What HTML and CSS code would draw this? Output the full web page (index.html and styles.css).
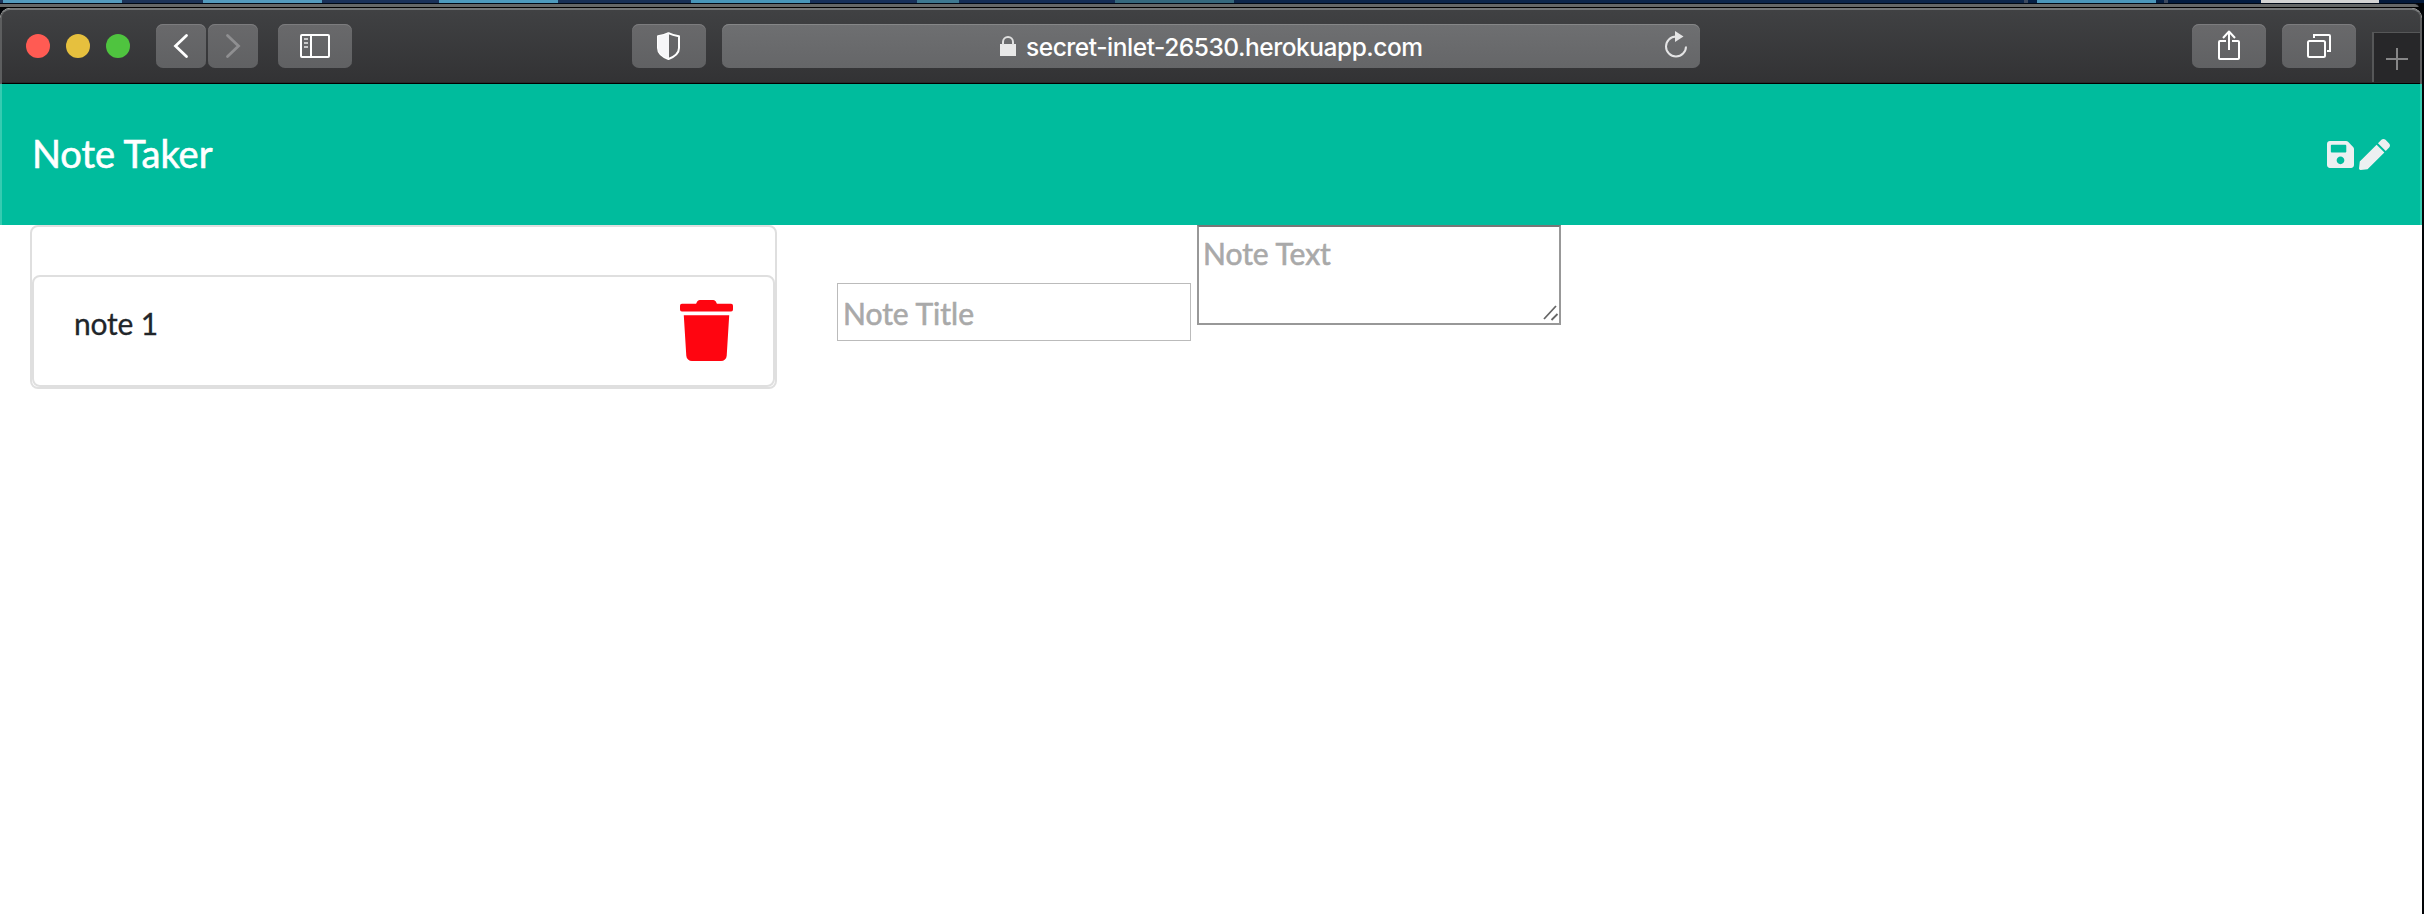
FILE: index.html
```html
<!DOCTYPE html>
<html lang="en">
<head>
<meta charset="utf-8">
<title>Note Taker</title>
<link rel="stylesheet" href="styles.css">
</head>
<body>
<div class="desktop"></div>
<div class="rim"></div>
<div class="window">
  <div class="toolbar">
    <div class="lights"><i class="light red"></i><i class="light yellow"></i><i class="light green"></i></div>
    <div class="nav">
      <button class="btn narrow"><svg width="50" height="44" fill="none" stroke="#fff" stroke-width="2.8" stroke-linecap="round"><path d="M30.5 11.5L19.5 22l11 10.500"/></svg></button>
      <button class="btn narrow"><svg width="50" height="44" fill="none" stroke="#8f8f91" stroke-width="2.8" stroke-linecap="round"><path d="M19.500 11.500L30.500 22l-11 10.500"/></svg></button>
    </div>
    <button class="btn sidebar"><svg width="74" height="44" fill="none" stroke="#fff" stroke-width="2"><rect x="23" y="11" width="28" height="22" rx="1"/><path d="M33 11v22"/><path stroke="#c8c8c9" d="M26 15h4M26 19h4M26 23h4"/></svg></button>
    <button class="btn shield"><svg width="74" height="44"><path fill="none" stroke="#fff" stroke-width="2" stroke-linejoin="round" d="M36.500 9.200C40 11 43.500 11.700 47 12.300V24c0 5.500-4.500 8.700-10.500 11C30.500 32.700 26 29.500 26 24V12.300C29.500 11.700 33 11 36.500 9.200z"/><path fill="#f6f6f8" d="M37 9C33 11 29.500 11.700 26 12.300V24c0 5.500 5 8.700 11 11z"/></svg></button>
    <div class="address">
      <svg class="lock" width="16" height="20"><path fill="#e8e8e8" d="M0 8h16v12H0z"/><path fill="none" stroke="#e0e0e0" stroke-width="2" d="M3 9V6a5 5 0 0 1 10 0v3"/></svg>
      <span class="url">secret-inlet-26530.herokuapp.com</span>
      <svg class="reload" width="24" height="28"><path fill="none" stroke="#e4e4e5" stroke-width="2" d="M12 5.500A10 10 0 1 0 22 15.500"/><path fill="#e4e4e5" d="M11 0l8.500 5.500L11 11z"/></svg>
    </div>
    <button class="btn share"><svg width="74" height="44" fill="none" stroke="#fff" stroke-width="2" stroke-linejoin="round"><path d="M34 17h-6q-1 0-1 1v16q0 1 1 1h18q1 0 1-1V18q0-1-1-1h-6M37 26V8M31 14l6-6.500 6 6.500"/></svg></button>
    <button class="btn"><svg width="74" height="44" fill="none" stroke="#fff" stroke-width="2"><rect x="26" y="17" width="17" height="16" rx="1.500"/><path d="M32 14v-3h15q1 0 1 1v15h-3"/></svg></button>
    <div class="newtab"><svg width="46" height="49" stroke="#868687" stroke-width="2"><path d="M12 26h22M23 15v22"/></svg></div>
  </div>
  <header class="header">
    <h1 class="brand">Note Taker</h1>
    <div class="actions">
      <svg width="27" height="31" viewBox="0 0 448 512" fill="#ecf0f1"><path d="M433.941 129.941l-83.882-83.882A48 48 0 0 0 316.118 32H48C21.490 32 0 53.490 0 80v352c0 26.510 21.490 48 48 48h352c26.510 0 48-21.490 48-48V163.882a48 48 0 0 0-14.059-33.941zM224 416c-35.346 0-64-28.654-64-64s28.654-64 64-64 64 28.654 64 64-28.654 64-64 64zm96-304.520V212c0 6.627-5.373 12-12 12H76c-6.627 0-12-5.373-12-12V108c0-6.627 5.373-12 12-12h228.520c3.183 0 6.235 1.264 8.485 3.515l3.480 3.480A11.996 11.996 0 0 1 320 111.480z"/></svg>
      <svg width="31" height="31" viewBox="0 0 512 512" fill="#ecf0f1"><path d="M290.740 93.240l128.020 128.020-277.990 277.990-114.140 12.600C11.350 513.540-1.560 500.620.140 485.340l12.700-114.220 277.900-277.880zm207.200-19.060l-60.110-60.110c-18.750-18.750-49.160-18.750-67.910 0l-56.550 56.550 128.020 128.020 56.550-56.550c18.750-18.760 18.750-49.160 0-67.910z"/></svg>
    </div>
  </header>
  <main class="content">
    <section class="list">
      <article class="note">
        <span class="note-title">note 1</span>
        <svg width="53" height="61" viewBox="0 0 448 512" preserveAspectRatio="none" fill="#ff0510"><path d="M432 32H312l-9.400-18.700A24 24 0 0 0 281.100 0H166.800a23.720 23.720 0 0 0-21.400 13.300L136 32H16A16 16 0 0 0 0 48v32a16 16 0 0 0 16 16h416a16 16 0 0 0 16-16V48a16 16 0 0 0-16-16zM53.200 467a48 48 0 0 0 47.900 45h245.800a48 48 0 0 0 47.900-45L416 128H32z"/></svg>
      </article>
    </section>
    <form class="editor">
      <input class="title-input" placeholder="Note Title">
      <div class="text-wrap">
        <textarea class="text-input" placeholder="Note Text"></textarea>
        <svg class="grip" width="16" height="16" stroke="#666" stroke-width="1.800"><path d="M1 14L13 1M8.500 15L14.500 9"/></svg>
      </div>
    </form>
  </main>
</div>
</body>
</html>
```
FILE: styles.css
```css
* { box-sizing: border-box; }
body {
  margin: 0;
  height: 914px;
  overflow: hidden;
  background: #020407;
  font-family: Lato, sans-serif;
}
svg { display: block; flex: none; }
.desktop {
  height: 3px;
  background: linear-gradient(90deg,
    #1c3358 3px, #539abd 3px 122px, #1c3358 122px 203px, #539abd 203px 322px,
    #1a3159 322px 439px, #4d9abd 439px 558px, #183056 558px 691px, #4795b9 691px 810px,
    #17305a 810px 917px, #3d7890 917px 959px, #142d55 959px 1115px, #35687d 1115px 1234px,
    #0d264b 1234px 2024px, #3d4a60 2024px 2028px, #051f44 2028px 2037px, #4b96ba 2037px 2156px,
    #051f44 2156px 2164px, #3d4a60 2164px 2168px, #031c40 2168px 2261px, #d3d3d3 2261px 2379px, #041a3b 2379px);
}
.rim {
  width: 2419px;
  height: 5px;
  border-top: 1px solid #000814;
  border-bottom: 1px solid #000;
  border-radius: 0 10px 0 0;
  background: #656767;
}
.window {
  width: 2422px;
  height: 906px;
  border-radius: 10px 10px 0 0;
  background: #fff;
  overflow: hidden;
}
.toolbar {
  display: flex;
  align-items: flex-start;
  height: 76px;
  padding: 14px 0 0 24px;
  border: solid #5d5e5f;
  border-width: 2px 2px 0;
  border-top-color: #737576;
  border-radius: 10px 10px 0 0;
  background: linear-gradient(#404143, #323234);
  box-shadow: inset 0 -1px #000, inset 0 -2px #29292b;
}
.lights { display: flex; flex: none; gap: 16px; padding-top: 10px; width: 130px; }
.light { width: 24px; height: 24px; border-radius: 50%; }
.red { background: #ff5b53; }
.yellow { background: #e6c03e; }
.green { background: #4fc43f; }
.nav { display: flex; flex: none; gap: 2px; }
.btn {
  display: block;
  flex: none;
  width: 74px;
  height: 44px;
  margin: 0 16px 0 0;
  padding: 0;
  border: 0;
  border-radius: 7px;
  background: linear-gradient(#69696b, #606163);
  box-shadow: inset 0 1px #7c7c7e;
}
.narrow { width: 50px; margin: 0; }
.sidebar { margin: 0 280px 0 20px; }
.address {
  display: flex;
  flex: none;
  align-items: center;
  width: 978px;
  height: 44px;
  padding-left: 278px;
  border-radius: 7px;
  background: linear-gradient(#6e6f71, #656668);
  box-shadow: inset 0 1px #858687;
}
.lock { margin-right: 10px; }
.url {
  width: 400px;
  margin-top: 2px;
  color: #fff;
  font: 500 24.5px/30px Inter, sans-serif;
  letter-spacing: -0.47px;
  white-space: nowrap;
}
.reload { margin-left: 238px; margin-top: -2px; }
.share { margin-left: 492px; }
.newtab {
  flex: 1;
  min-width: 0;
  height: 50px;
  margin-top: 8px;
  border: solid #565758;
  border-width: 1px 0 0 2px;
  background: #272729;
}
.header {
  display: flex;
  justify-content: space-between;
  align-items: center;
  height: 141px;
  padding: 0 30px 0 30px;
  border: solid #36cbb1;
  border-width: 0 2px;
  background: #00bc9d;
}
.brand {
  margin: -4px 0 0;
  color: #fff;
  font-size: 38px;
  font-weight: 400;
  line-height: 60px;
  letter-spacing: -0.05px;
  -webkit-text-stroke: 0.6px #fff;
}
.actions { display: flex; gap: 5px; }
.content { display: flex; align-items: flex-start; padding-left: 30px; }
.list {
  width: 747px;
  height: 164px;
  padding-top: 48px;
  border: 2px solid #dfdfdf;
  border-radius: 8px;
}
.note {
  display: flex;
  justify-content: space-between;
  height: 112px;
  padding: 23px 40px 0 40px;
  border: 2px solid #dfdfdf;
  border-radius: 8px;
}
.note-title { color: #212529; font-size: 30px; line-height: 46px; letter-spacing: -0.2px; -webkit-text-stroke: 0.3px #212529; }
.editor { display: flex; align-items: flex-start; gap: 6px; margin-left: 60px; }
.title-input, .text-input {
  display: block;
  margin: 0;
  border-radius: 0;
  outline: 0;
  background: #fff;
  font: 400 30px/45px Lato, sans-serif;
}
.title-input {
  width: 354px;
  height: 58px;
  margin-top: 58px;
  padding: 2px 5px 0;
  border: 1px solid #bbb;
}
.text-wrap { position: relative; }
.text-input {
  width: 364px;
  height: 100px;
  padding: 4px;
  border: 2px solid #989898;
  border-top-color: #777;
  resize: none;
  overflow: hidden;
}
::placeholder { color: #a9a9a9; opacity: 1; -webkit-text-stroke: 0.6px #a9a9a9; }
.grip { position: absolute; right: 2px; bottom: 4px; }
```
